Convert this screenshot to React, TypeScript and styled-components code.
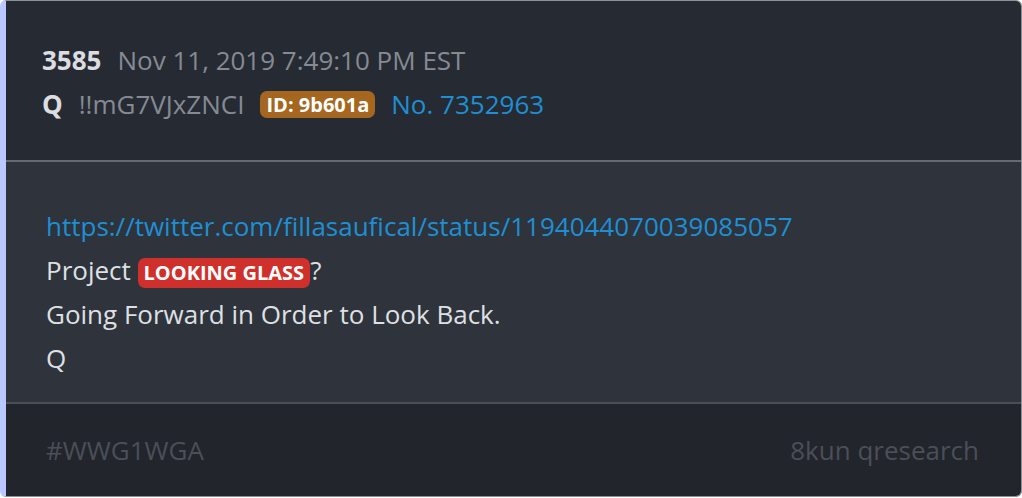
import styled, { createGlobalStyle } from 'styled-components';

const Global = createGlobalStyle`
  html, body {
    margin: 0;
    padding: 0;
    background: #ffffff;
  }
  body {
    font-family: "Open Sans", "Liberation Sans", sans-serif;
  }
`;

const Card = styled.div`
  box-sizing: border-box;
  width: 1022px;
  height: 497px;
  border: 1px solid #8d9199;
  border-left: 6px solid #b9c8ff;
  border-radius: 6px;
  overflow: hidden;
  display: flex;
  flex-direction: column;
  font-size: 26px;
  line-height: 44px;
`;

const Header = styled.div`
  background: #262a33;
  padding: 37px 36px 0;
  height: 161px;
  box-sizing: border-box;
  border-bottom: 2px solid #666a72;
`;

const Row = styled.div`
  display: flex;
  align-items: center;
  gap: 16px;
  white-space: nowrap;
`;

const Strong = styled.span`
  font-weight: 700;
  color: #dcdde0;
`;

const Muted = styled.span`
  color: #858a93;
`;

const Badge = styled.span<{ tone: 'id' | 'alert' }>`
  display: inline-block;
  background: ${p => (p.tone === 'id' ? '#a5661f' : '#cf302c')};
  color: #ffffff;
  font-weight: 700;
  font-size: 20px;
  line-height: ${p => (p.tone === 'id' ? '27px' : '30px')};
  padding: 0 6px;
  border-radius: 7px;
  vertical-align: middle;
  text-transform: ${p => (p.tone === 'alert' ? 'uppercase' : 'none')};
`;

const Link = styled.a`
  color: #1f8fd3;
  text-decoration: none;
`;

const Body = styled.div`
  flex: 1;
  background: #2e333c;
  padding: 42px 40px 0;
  color: #dfe0e3;
  border-bottom: 2px solid #4a4e56;
`;

const Line = styled.div`
  white-space: nowrap;
`;

const Footer = styled.div`
  background: #22252c;
  height: 92px;
  box-sizing: border-box;
  padding: 24px 42px 0 40px;
  display: flex;
  justify-content: space-between;
  color: #4a4f58;
`;

export default function App() {
  return (
    <>
      <Global />
      <Card>
        <Header>
          <Row>
            <Strong>3585</Strong>
            <Muted>Nov 11, 2019 7:49:10 PM EST</Muted>
          </Row>
          <Row>
            <Strong>Q</Strong>
            <Muted>!!mG7VJxZNCI</Muted>
            <Badge tone="id">ID: 9b601a</Badge>
            <Link href="#">No. 7352963</Link>
          </Row>
        </Header>
        <Body>
          <Line>
            <Link href="#">https://twitter.com/fillasaufical/status/1194044070039085057</Link>
          </Line>
          <Line>
            Project <Badge tone="alert">Looking Glass</Badge>?
          </Line>
          <Line>Going Forward in Order to Look Back.</Line>
          <Line>Q</Line>
        </Body>
        <Footer>
          <span>#WWG1WGA</span>
          <span>8kun qresearch</span>
        </Footer>
      </Card>
    </>
  );
}
